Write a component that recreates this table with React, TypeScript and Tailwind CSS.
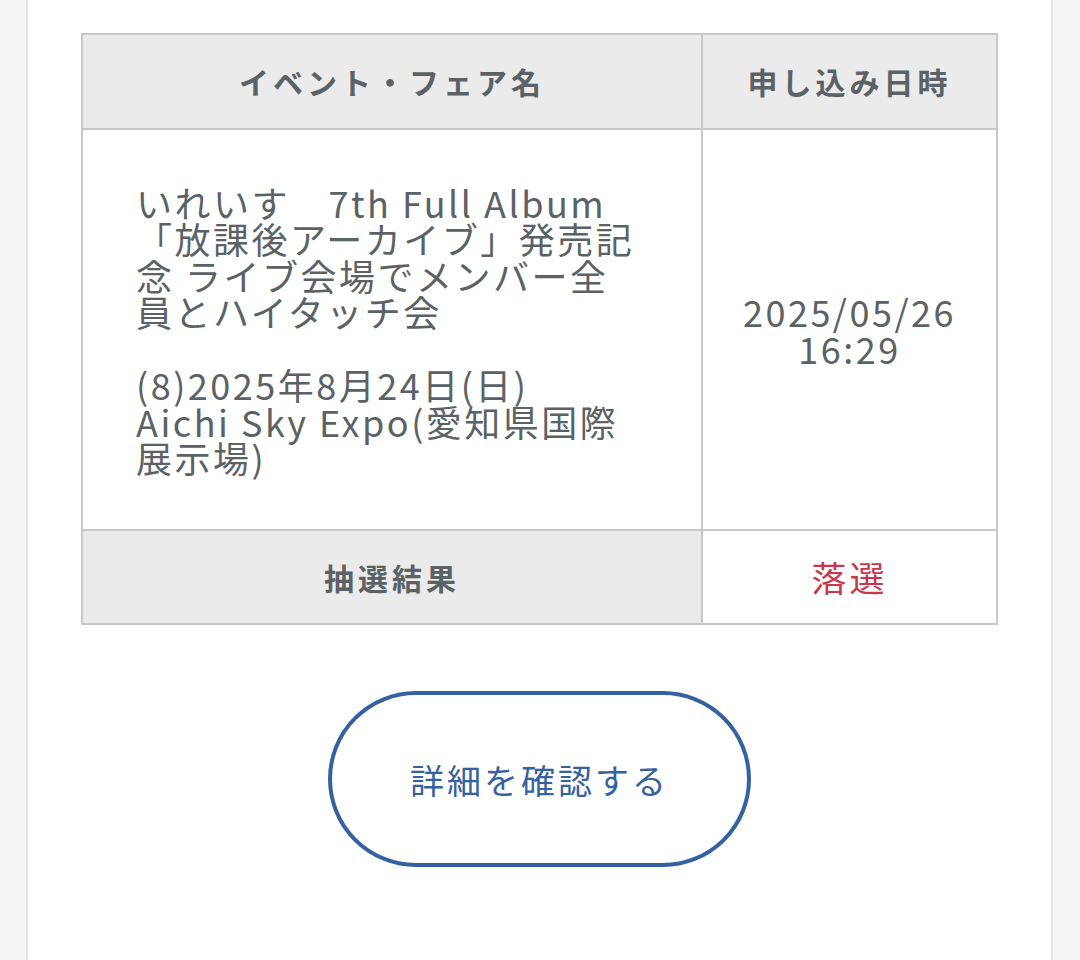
import React from "react";

const font = { fontFamily: '"Noto Sans CJK JP", "Noto Sans", sans-serif' };

export default function App() {
  const eventLines = [
    "いれいす　7th Full Album",
    "「放課後アーカイブ」発売記",
    "念 ライブ会場でメンバー全",
    "員とハイタッチ会",
    "\u00a0",
    "(8)2025年8月24日(日)",
    "Aichi Sky Expo(愛知県国際",
    "展示場)",
  ];

  return (
    <div className="min-h-[960px] bg-[#f5f5f5] pl-[26px] pr-[27px]" style={font}>
      <div className="min-h-[960px] bg-white border-x-2 border-[#e6e6e6] px-[53px] pt-[33px]">
        <table className="w-full border-collapse table-fixed">
          <colgroup>
            <col className="w-[620px]" />
            <col />
          </colgroup>
          <tbody>
            <tr className="h-[95px]">
              <th className="border-2 border-[#c8c8c8] bg-[#ebebeb] text-[30px] font-bold tracking-[4px] text-[#5b6266]">
                イベント・フェア名
              </th>
              <th className="border-2 border-[#c8c8c8] bg-[#ebebeb] text-[30px] font-bold tracking-[4px] text-[#5b6266]">
                申し込み日時
              </th>
            </tr>
            <tr className="h-[401px]">
              <td className="border-2 border-[#c8c8c8] pl-[53px] pr-[20px] align-middle text-[36px] leading-[36.5px] tracking-[2.5px] text-[#5b6266]">
                {eventLines.map((l, i) => (
                  <div key={i} className="whitespace-pre">
                    {l}
                  </div>
                ))}
              </td>
              <td className="border-2 border-[#c8c8c8] text-center align-middle text-[36px] leading-[36.5px] tracking-[2.5px] text-[#5b6266]">
                <div>2025/05/26</div>
                <div>16:29</div>
              </td>
            </tr>
            <tr className="h-[94px]">
              <th className="border-2 border-[#c8c8c8] bg-[#ebebeb] text-[30px] font-bold tracking-[4px] text-[#5b6266]">
                抽選結果
              </th>
              <td className="border-2 border-[#c8c8c8] bg-white text-center text-[35px] tracking-[3px] text-[#c8374b]">
                落選
              </td>
            </tr>
          </tbody>
        </table>

        <div className="flex justify-center pt-[66px]">
          <button className="w-[423px] h-[176px] rounded-full border-4 border-[#3461a0] bg-white text-[34px] tracking-[3px] text-[#3461a0]">
            詳細を確認する
          </button>
        </div>
      </div>
    </div>
  );
}
